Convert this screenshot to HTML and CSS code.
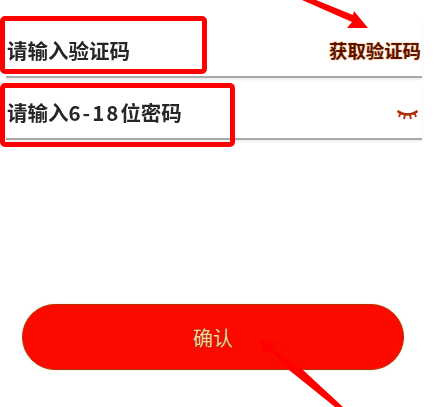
FILE: index.html
```html
<!DOCTYPE html>
<html lang="zh">
<head>
    <meta charset="UTF-8">
    <meta name="viewport" content="width=device-width, initial-scale=1.0">
    <title>确认</title>
    <link rel="stylesheet" href="styles.css">
</head>
<body>
    <div class="form">
        <div class="row">
            <span class="placeholder">请输入验证码</span>
            <span class="get-code">获取验证码</span>
        </div>
        <div class="row">
            <span class="placeholder">请输入<span class="num">6-18</span>位密码</span>
            <svg class="eye" width="21" height="12" viewBox="0 0 21 12">
                <path d="M0.5 2 C6 6.5 15 6.5 20.5 2" fill="none" stroke="#b03008" stroke-width="2.6"/>
                <path d="M3.5 4 L2 8 M8 6 L7 10 M13 6 L14 10 M17.5 4 L19 8" fill="none" stroke="#b03008" stroke-width="1.9"/>
            </svg>
        </div>
    </div>
    <button class="confirm-btn">确认</button>

    <!-- пометки поверх скриншота -->
    <div class="mark mark-code"></div>
    <div class="mark mark-pass"></div>
    <svg class="arrows" width="443" height="407" viewBox="0 0 443 407">
        <polygon points="302,0 316,0 353,15 354,11 368,28 347,28 352,22" fill="#ff0000"/>
        <polygon points="259,339 277,343 271,348 303,370 343,407 335,407 289,370 270,350 265,355" fill="#ff0000"/>
    </svg>
</body>
</html>
```

FILE: styles.css
```css
body {
    margin: 0;
    height: 407px;
    position: relative;
    overflow: hidden;
    background: #fff;
    font-family: "Noto Sans CJK SC", "Liberation Sans", sans-serif;
}
.form {
    padding-top: 16px;
    margin: 0 21px 0 6px;
}
.row {
    display: flex;
    justify-content: space-between;
    align-items: center;
    box-sizing: border-box;
    height: 62px;
    padding: 10px 1px 0 1px;
    border-bottom: 2px solid #a8a8a8;
    box-shadow: 0 2px 2px #eee;
}
.placeholder {
    font-size: 20.5px;
    line-height: 24px;
    margin-bottom: 2px;
    font-weight: bold;
    color: #262626;
    filter: blur(0.4px);
}
.num {
    letter-spacing: 2px;
}
.get-code {
    font-size: 18.4px;
    line-height: 24px;
    margin-bottom: 2px;
    font-weight: bold;
    color: #5e1000;
    text-shadow: 0 0 2px #e8a050;
}
.eye {
    margin: 4px 3px 0 0;
}
.confirm-btn {
    display: block;
    box-sizing: border-box;
    width: 382px;
    height: 66px;
    margin: 164px 0 0 22px;
    background: #fb0a00;
    border: 1.5px solid #b83000;
    border-radius: 33px;
    box-shadow: 0 0 3px #e6e2c8;
    font-family: inherit;
    font-size: 20px;
    color: #eed6a0;
    text-shadow: 0 0 2px #8a2a00;
}
.mark {
    position: absolute;
    box-sizing: border-box;
    border: 5px solid #ff0000;
    border-radius: 5px;
}
.mark-code {
    left: 0;
    top: 16px;
    width: 207px;
    height: 58px;
}
.mark-pass {
    left: 0;
    top: 83px;
    width: 235px;
    height: 64px;
}
.arrows {
    position: absolute;
    left: 0;
    top: 0;
    pointer-events: none;
}
```
